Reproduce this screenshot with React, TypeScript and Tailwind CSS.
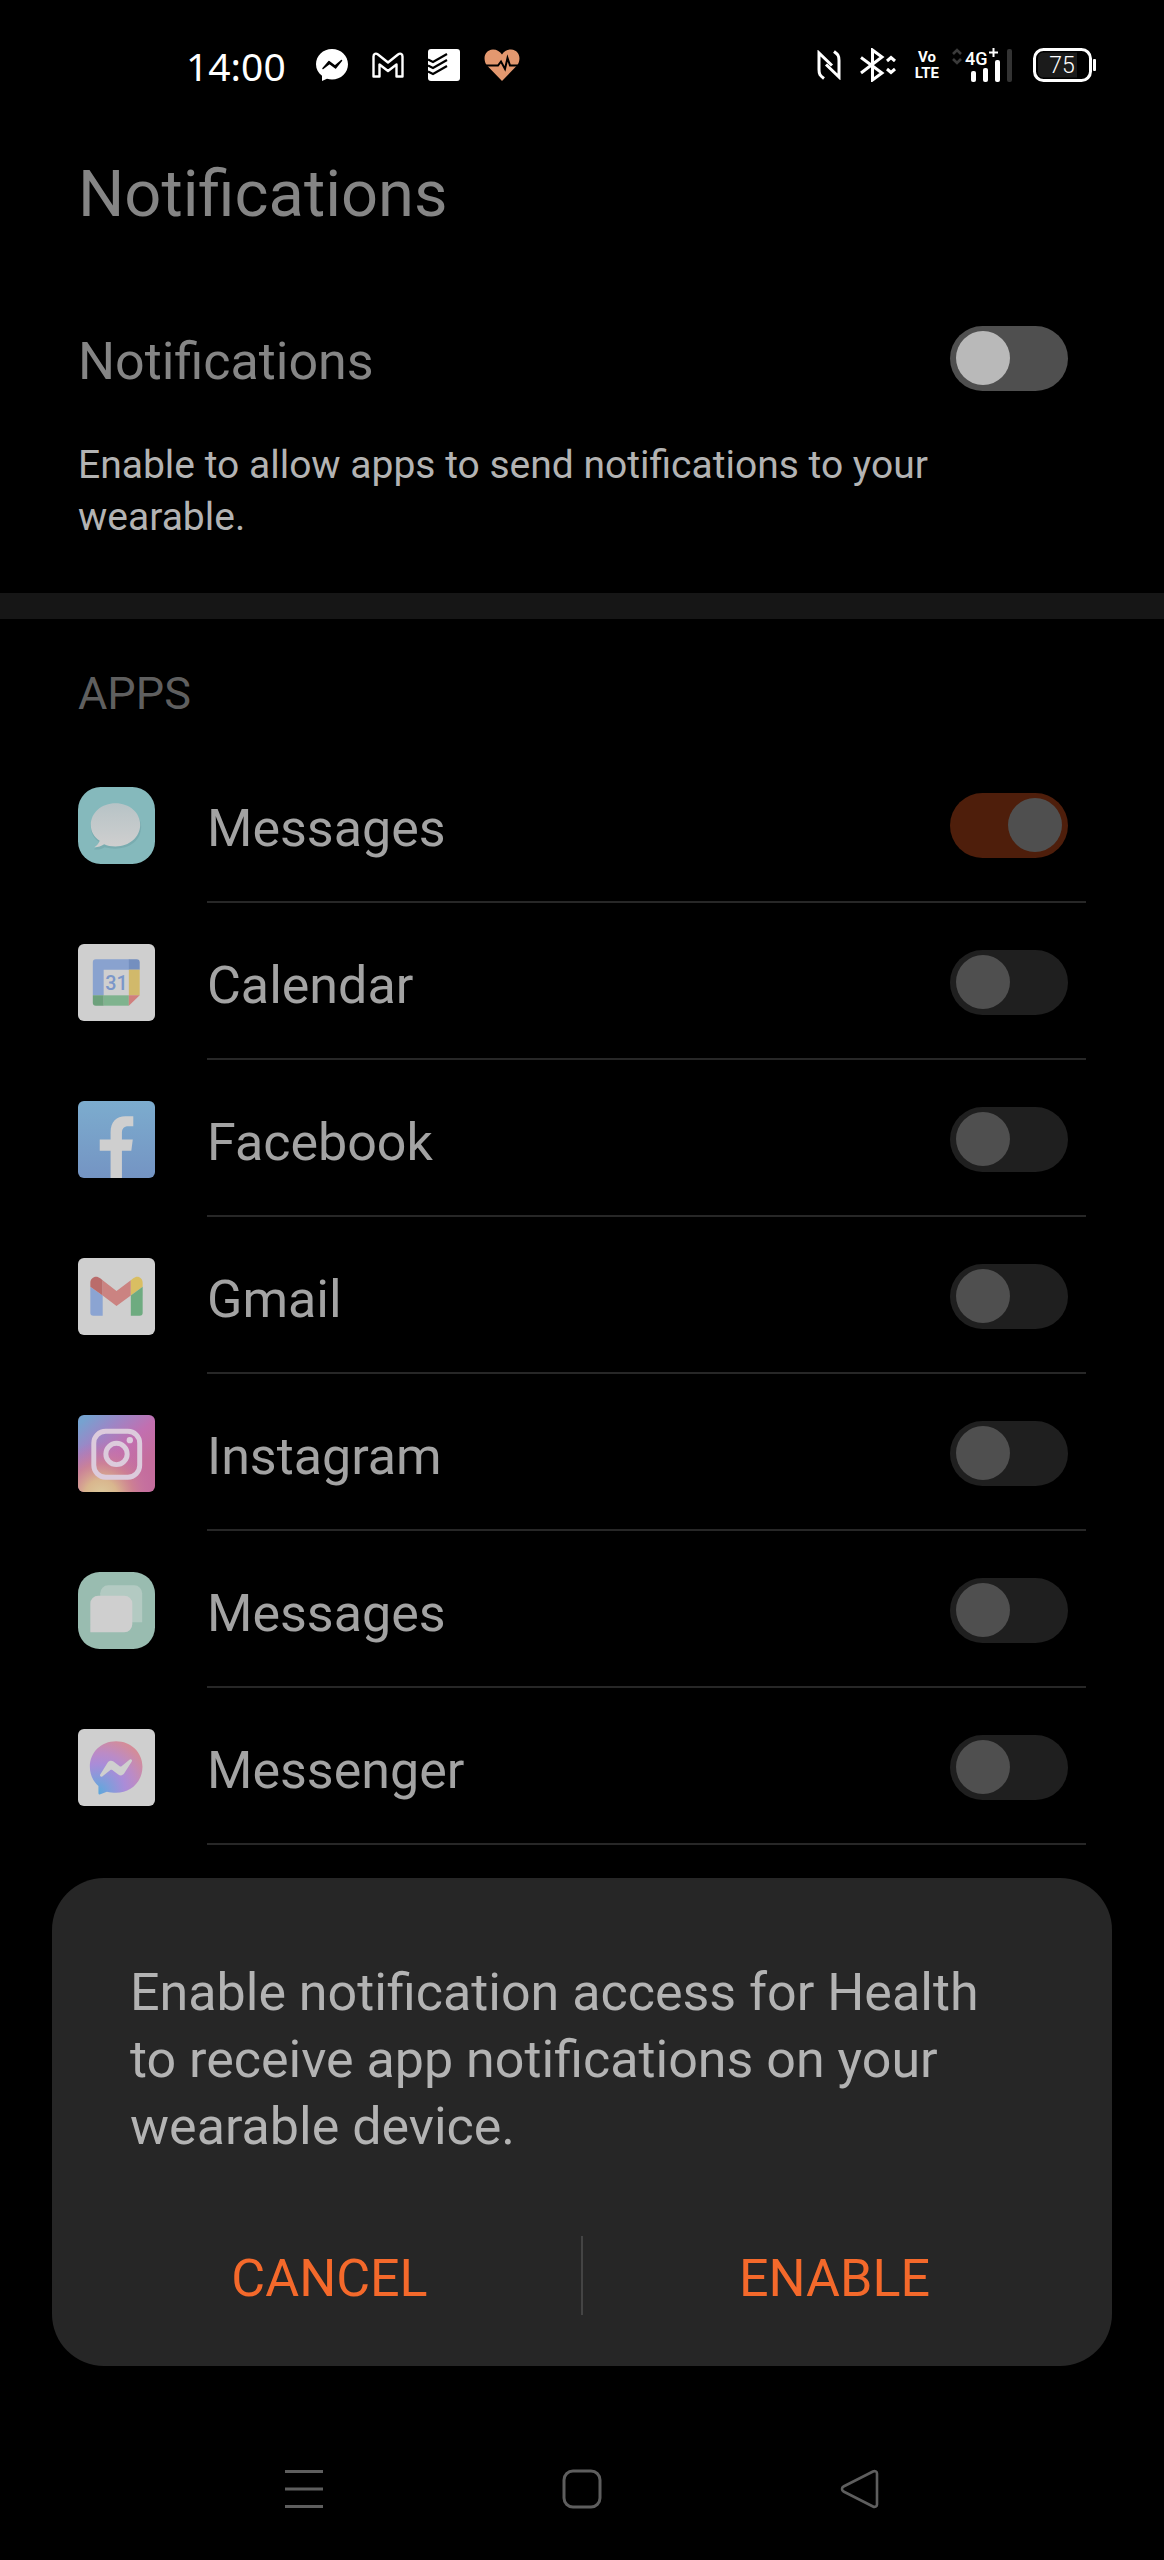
import { useState, type ReactNode } from 'react';

interface AppEntry {
    id: string;
    name: string;
    enabled: boolean;
    icon: ReactNode;
}

function BubbleIcon() {
    return (
        <svg viewBox="0 0 78 78" className="size-full">
            <defs>
                <linearGradient id="bubble" x1="0" y1="0" x2="0" y2="1">
                    <stop offset="0" stopColor="#b7c3c6" />
                    <stop offset="1" stopColor="#cfcfcf" />
                </linearGradient>
            </defs>
            <rect width="78" height="78" rx="23" fill="#85b9bc" />
            <path d="M16 63c4 1 8 0 11-2 18 5 37-3 37-21 0-12-12-21-26-21s-25 9-25 21c0 8 4 13 9 16 0 3-3 5-6 7Z" fill="#79acb0" />
            <path d="M16.500 61c4 0 7-1 10-3 3 1.500 7 2.300 11.500 2.300 14 0 25-9.500 25-22S52 16.500 38 16.500s-25 9.500-25 22c0 6.500 3 12 9 16-1 3-3 5-5.500 6.500Z" fill="url(#bubble)" />
        </svg>
    );
}

function CalendarIcon() {
    return (
        <svg viewBox="0 0 78 78" className="size-full">
            <rect width="78" height="78" rx="6" fill="#cfcfcf" />
            <path d="M18 15.500h34V26H26v26H15V18.500a3 3 0 0 1 3-3Z" fill="#89a2cf" />
            <path d="M51.500 15.500h8a3 3 0 0 1 3 3V26h-11Z" fill="#748fbf" />
            <path d="M51.500 26h11v26h-11Z" fill="#d1b96b" />
            <path d="M26 52h25.500v10.500H26Z" fill="#7fb38e" />
            <path d="M15 52h11v10.500h-8a3 3 0 0 1-3-3Z" fill="#6da17c" />
            <path d="M51.500 52h11l-11 10.500Z" fill="#d07f7d" />
            <text x="39" y="47" textAnchor="middle" fontSize="20" fontWeight="500" fill="#7b97c9">31</text>
        </svg>
    );
}

function FacebookIcon() {
    return (
        <svg viewBox="0 0 78 78" className="size-full">
            <defs>
                <linearGradient id="fb" x1="0" y1="0" x2="0" y2="1">
                    <stop offset="0" stopColor="#7cacce" />
                    <stop offset="1" stopColor="#7494c3" />
                </linearGradient>
            </defs>
            <rect width="78" height="78" rx="6" fill="url(#fb)" />
            <path d="M33 78V50.500H22V39h11v-7.500c0-10.500 6-16 15-16h8v10h-5c-4.500 0-6.500 2.500-6.500 6.500v7h11L54 50.500h-9.500V78Z" fill="#cfcfcf" />
        </svg>
    );
}

function GmailIcon() {
    return (
        <svg viewBox="0 0 78 78" className="size-full">
            <rect width="78" height="78" rx="6" fill="#cfcfcf" />
            <path d="M12.500 29 25 38v20.500h-9.500a3 3 0 0 1-3-3Z" fill="#8ba4d2" />
            <path d="M12.500 25c0-5.500 6-8 10-4.500l2.500 2V38l-12.500-9Z" fill="#ba6c6b" />
            <path d="m25 22.500 14 11 14.500-11V38L39 48.500 25 38Z" fill="#cb8381" />
            <path d="m53.500 22.500 2.500-2c4-3.500 9.500-1 9.500 4.500v4l-12 9Z" fill="#d9be62" />
            <path d="M65.500 29v26.500a3 3 0 0 1-3 3h-9V38Z" fill="#6eab80" />
        </svg>
    );
}

function InstagramIcon() {
    return (
        <svg viewBox="0 0 78 78" className="size-full">
            <defs>
                <linearGradient id="ig-base" x1="0.150" y1="0" x2="0.750" y2="0.700">
                    <stop offset="0" stopColor="#76a2d0" />
                    <stop offset="0.300" stopColor="#9b87c6" />
                    <stop offset="0.650" stopColor="#c26fb0" />
                    <stop offset="1" stopColor="#c46d9c" />
                </linearGradient>
                <radialGradient id="ig-glow" cx="0.300" cy="1.050" r="0.700">
                    <stop offset="0" stopColor="#dccb9d" />
                    <stop offset="0.300" stopColor="#d9b68e" />
                    <stop offset="0.600" stopColor="#cf8590" stopOpacity="0.800" />
                    <stop offset="1" stopColor="#c46fae" stopOpacity="0" />
                </radialGradient>
            </defs>
            <rect width="78" height="78" rx="6" fill="url(#ig-base)" />
            <rect width="78" height="78" rx="6" fill="url(#ig-glow)" />
            <g fill="none" stroke="#dccbdc" strokeWidth="5">
                <rect x="16" y="16.500" width="46.500" height="46.500" rx="12" />
                <circle cx="39" cy="39.500" r="10.800" />
            </g>
            <circle cx="52.500" cy="25.500" r="3.200" fill="#dccbdc" />
        </svg>
    );
}

function ChatCardsIcon() {
    return (
        <svg viewBox="0 0 78 78" className="size-full">
            <rect width="78" height="78" rx="22" fill="#99bcb0" />
            <path d="M30.500 13.500H57a8 8 0 0 1 8 8V51H22.500V21.500a8 8 0 0 1 8-8Z" fill="#b3cac2" />
            <path d="M20.500 24H47a8 8 0 0 1 8 8v21a8 8 0 0 1-8 8H12.500V32a8 8 0 0 1 8-8Z" fill="#cfcfcf" />
        </svg>
    );
}

function MessengerIcon() {
    return (
        <svg viewBox="0 0 78 78" className="size-full">
            <defs>
                <radialGradient id="msgr" cx="0.150" cy="0.950" r="1.050">
                    <stop offset="0" stopColor="#5ba9dc" />
                    <stop offset="0.200" stopColor="#7d9edb" />
                    <stop offset="0.500" stopColor="#aa8cd8" />
                    <stop offset="0.700" stopColor="#bb8bc6" />
                    <stop offset="1" stopColor="#d48c98" />
                </radialGradient>
            </defs>
            <rect width="78" height="78" rx="6" fill="#cfcfcf" />
            <path d="M38.500 12.300c-15 0-26.500 11-26.500 26 0 8 3.300 14.700 8.700 19.500V65c0 1 1 1.600 2 1.200l6.600-2.600c3 .8 6 1.100 9.200 1.100 15 0 26.800-11.400 26.800-26.400S53.500 12.300 38.500 12.300Z" fill="url(#msgr)" />
            <path d="m22.500 46 7.600-12c1.200-2 4-2.500 5.900-1l6.200 4.700c.6.400 1.300.4 1.900 0l8.300-6.800c1.400-1 3 .6 2.100 2l-7.800 12.300c-1.200 2-4 2.500-5.900 1L34.700 41.500c-.6-.4-1.300-.4-1.900 0L24.600 48c-1.300 1-3-.6-2.100-2Z" fill="#cfcfcf" />
        </svg>
    );
}

const APPS: AppEntry[] = [
    { id: 'sms', name: 'Messages', enabled: true, icon: <BubbleIcon /> },
    { id: 'calendar', name: 'Calendar', enabled: false, icon: <CalendarIcon /> },
    { id: 'facebook', name: 'Facebook', enabled: false, icon: <FacebookIcon /> },
    { id: 'gmail', name: 'Gmail', enabled: false, icon: <GmailIcon /> },
    { id: 'instagram', name: 'Instagram', enabled: false, icon: <InstagramIcon /> },
    { id: 'messages', name: 'Messages', enabled: false, icon: <ChatCardsIcon /> },
    { id: 'messenger', name: 'Messenger', enabled: false, icon: <MessengerIcon /> },
];

interface ToggleProps {
    id: string;
    checked: boolean;
    disabled?: boolean;
    onChange?: (checked: boolean) => void;
}

function Toggle({ id, checked, disabled, onChange }: ToggleProps) {
    return (
        <input
            id={id}
            type="checkbox"
            role="switch"
            checked={checked}
            disabled={disabled}
            onChange={(e) => onChange?.(e.target.checked)}
            className="mr-[18px] flex h-[65px] w-[118px] shrink-0 appearance-none items-center rounded-full bg-[#4f4f4f] px-[6px] before:size-[54px] before:rounded-full before:bg-[#b9b9b9] checked:justify-end checked:bg-[#c24d1c] disabled:bg-[#1f1f1f] disabled:before:bg-[#4f4f4f] disabled:checked:bg-[#4e1e0b]"
        />
    );
}

function StatusBar() {
    return (
        <header className="flex h-[130px] items-center justify-between pr-[68px] pl-[186px] text-white">
            <div className="flex items-center">
                <time className="mr-[30px] font-['Noto_Sans'] text-[39px] leading-none">14:00</time>
                <div className="flex items-center gap-6">
                    <svg width="32" height="34" viewBox="0 0 32 34">
                        <path d="M16 1C7 1 0 7.600 0 16.300c0 5 2.300 8.800 6 11.500V33l5-2.200c1.600.5 3.300.7 5 .7 9 0 16-6.600 16-15.200S25 1 16 1Z" fill="#fff" />
                        <path d="m7 20.500 6-7 6 4.500 6.500-5.500-6 7.500-6-4.500Z" fill="#000" stroke="#000" strokeWidth="1.500" strokeLinejoin="round" />
                    </svg>
                    <svg width="32" height="26" viewBox="0 0 32 26" fill="none" stroke="#fff" strokeWidth="2.400" strokeLinejoin="round">
                        <path d="M1.500 24.500V4.500C1.500 1.500 4 1 6 2.500l10 8 10-8c2-1.500 4.500-1 4.500 2v20h-6V12.500L16 19 7.500 12.500v12Z" />
                    </svg>
                    <svg width="32" height="32" viewBox="0 0 32 32">
                        <rect width="32" height="32" rx="3" fill="#fff" />
                        <path d="m0 12.500 5 2.500 14-8M0 18.500 5 21l14-8M0 24.500 5 27l14-8" transform="translate(0 -2)" fill="none" stroke="#000" strokeWidth="2.200" />
                    </svg>
                    <svg width="36" height="34" viewBox="0 0 36 34">
                        <path d="M18 33 3 17.500C-1.500 12 0 2 9 1.500c4 0 7 2 9 5 2-3 5-5 9-5 9 .5 10.500 10.500 6 16Z" fill="#e3986f" />
                        <path d="M0 17.500h14l3-4 4 7.500 2.500-11 2.500 7.500h10" fill="none" stroke="#000" strokeWidth="2" />
                    </svg>
                </div>
            </div>
            <div className="flex items-center">
                <svg width="24" height="30" viewBox="0 0 24 30" fill="none" stroke="#fff" strokeWidth="3" className="mr-[19px]">
                    <path d="M7 28.500c-4-3-5-4-5-9V3l13 12.500M17 1.500c4 3 5 4 5 9V27L9 14.500" />
                </svg>
                <svg width="36" height="34" viewBox="0 0 36 34" fill="none" stroke="#fff" strokeWidth="3" className="mr-[19px]">
                    <path d="M1 9.500 22 25l-9.500 7V2L22 9 1 25M27 13l4-3.500 4 3.500M27 21l4 3.500 4-3.500" />
                </svg>
                <div className="mr-[13px] flex flex-col items-center text-[15px] leading-[16px] font-bold">
                    <span>Vo</span>
                    <span>LTE</span>
                </div>
                <svg width="62" height="36" viewBox="0 0 62 36" className="mr-[19px]">
                    <path d="m1 7 4-4 4 4M1 12l4 4 4-4" fill="none" stroke="#3a3a3a" strokeWidth="2.600" />
                    <text x="13" y="18" fontSize="18" fontWeight="500" fill="#fff">4G</text>
                    <path d="M37 5.500h9M41.500 1v9" stroke="#fff" strokeWidth="2" />
                    <rect x="19" y="24" width="5" height="11" rx="2" fill="#fff" />
                    <rect x="31" y="21" width="5" height="14" rx="2" fill="#fff" />
                    <rect x="43" y="13" width="5" height="22" rx="2" fill="#fff" />
                    <rect x="55" y="2" width="5" height="33" rx="2" fill="#333" />
                </svg>
                <svg width="63" height="34" viewBox="0 0 63 34">
                    <rect x="1.500" y="1.500" width="56" height="31" rx="9" fill="none" stroke="#fff" strokeWidth="3" />
                    <path d="M11 4.500h33v25H11c-4 0-6-2-6-6v-13c0-4 2-6 6-6Z" fill="#1b1b1b" />
                    <rect x="60" y="11" width="3" height="12" rx="1" fill="#fff" />
                    <text x="29" y="25" textAnchor="middle" fontSize="23" fontWeight="300" fill="#fff">75</text>
                </svg>
            </div>
        </header>
    );
}

function AppRow({ app }: { app: AppEntry }) {
    return (
        <li className="grid grid-cols-[77px_1fr] gap-x-[52px]">
            <div className="flex h-[155px] items-center pt-[3px]">
                <div className="size-[77px]">{app.icon}</div>
            </div>
            <div className="flex h-[157px] items-center justify-between border-b-2 border-[#272727] pt-[3px]">
                <label htmlFor={app.id} className="pt-[8px] text-[52px] leading-[62px] text-[#a3a3a3]">
                    {app.name}
                </label>
                <Toggle id={app.id} checked={app.enabled} disabled />
            </div>
        </li>
    );
}

function AccessDialog() {
    return (
        <div role="dialog" aria-labelledby="access-text" className="mx-[52px] rounded-[52px] bg-[#262626] px-[26px] pt-[81px] pb-[51px]">
            <p id="access-text" className="px-[52px] text-[52px] leading-[67px] text-[#b3b3b3]">
                Enable notification access for Health to receive app notifications on your wearable device.
            </p>
            <div className="mt-[76px] flex h-[79px] items-stretch text-[52px] leading-[62px] text-[#f4692b]">
                <button type="button" className="flex-1 pt-[6px]">CANCEL</button>
                <span className="w-[2px] bg-[#444]" />
                <button type="button" className="flex-1 pt-[6px]">ENABLE</button>
            </div>
        </div>
    );
}

function NavBar() {
    return (
        <nav className="grid h-[194px] grid-cols-3 items-center px-[165px] pt-[52px]">
            <button type="button" aria-label="Recent apps" className="justify-self-center">
                <svg width="40" height="40" viewBox="0 0 40 40" stroke="#5e5e5e" strokeWidth="3">
                    <path d="M1 2.500h38M1 20h38M1 37.500h38" />
                </svg>
            </button>
            <button type="button" aria-label="Home" className="justify-self-center">
                <svg width="40" height="40" viewBox="0 0 40 40" fill="none" stroke="#5e5e5e" strokeWidth="3">
                    <rect x="2" y="2" width="36" height="36" rx="9" />
                </svg>
            </button>
            <button type="button" aria-label="Back" className="justify-self-center">
                <svg width="40" height="40" viewBox="0 0 40 40" fill="none" stroke="#5e5e5e" strokeWidth="2.600">
                    <path d="M33 2.500 3.500 17.500c-2 1-2 4 0 5L33 37.500c2 1 4 0 4-2v-31c0-2-2-3-4-2Z" />
                </svg>
            </button>
        </nav>
    );
}

export default function App() {
    const [allowed, setAllowed] = useState(false);

    return (
        <div className="min-h-screen bg-black font-[Roboto,sans-serif]">
            <StatusBar />
            <main>
                <section className="px-[78px] pt-[26px] pb-[50px]">
                    <h1 className="text-[65px] leading-[76px] text-[#858585]">Notifications</h1>
                    <div className="mt-[91px] flex items-center justify-between">
                        <label htmlFor="all" className="pt-[8px] text-[52px] leading-[62px] text-[#858585]">
                            Notifications
                        </label>
                        <Toggle id="all" checked={allowed} onChange={setAllowed} />
                    </div>
                    <p className="mt-[46px] pr-[78px] text-[39px] leading-[52px] text-[#b3b3b3]">
                        Enable to allow apps to send notifications to your wearable.
                    </p>
                </section>
                <div className="h-[26px] bg-[#161616]" />
                <section className="px-[78px] pt-[48px]">
                    <h2 className="mb-[25px] text-[45px] leading-[54px] text-[#5f5f5f]">APPS</h2>
                    <ul>
                        {APPS.map((app) => (
                            <AppRow key={app.id} app={app} />
                        ))}
                    </ul>
                </section>
            </main>

            {/* Dialog and system navigation sit over the list */}
            <div className="fixed inset-x-0 bottom-0">
                <AccessDialog />
                <NavBar />
            </div>
        </div>
    );
}
